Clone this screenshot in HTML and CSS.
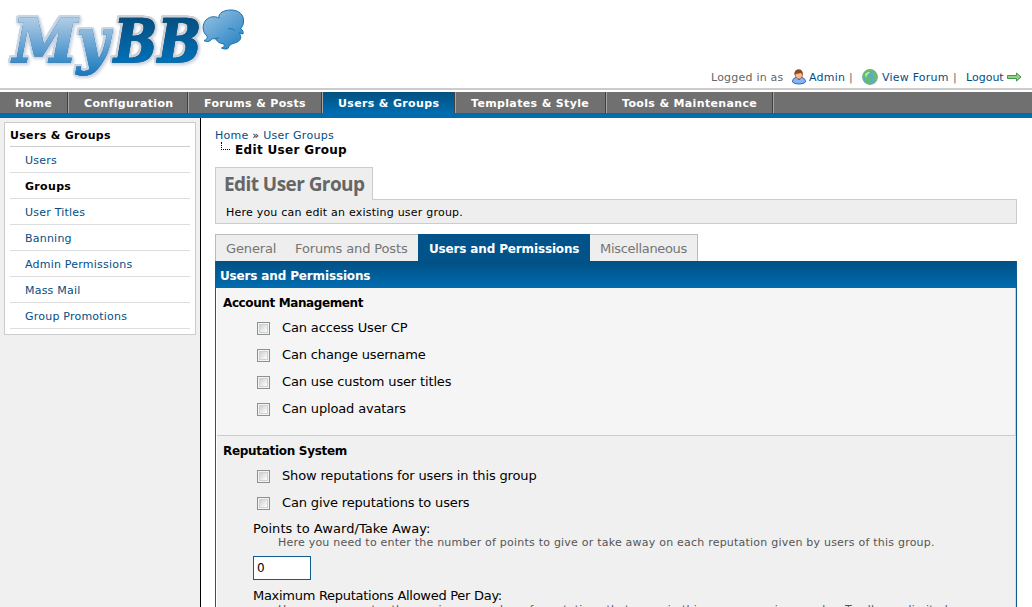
FILE: index.html
```html
<!DOCTYPE html>
<html lang="en">
<head>
<meta charset="utf-8">
<title>Edit User Group</title>
<link rel="stylesheet" href="styles.css">
</head>
<body>
<header class="header">
  <svg class="logo" width="250" height="84" viewBox="0 0 250 84" role="img" aria-label="MyBB">
    <defs>
      <linearGradient id="light" gradientUnits="userSpaceOnUse" x1="0" y1="18" x2="0" y2="76"><stop offset="0" stop-color="#b1cce6"/><stop offset="1" stop-color="#1478be"/></linearGradient>
      <linearGradient id="dark" gradientUnits="userSpaceOnUse" x1="0" y1="18" x2="0" y2="63"><stop offset="0" stop-color="#064f80"/><stop offset="1" stop-color="#0071b9"/></linearGradient>
      <linearGradient id="cloud" x1="0" y1="0" x2=".8" y2="1"><stop offset="0" stop-color="#9bc4e4"/><stop offset="1" stop-color="#2a84c3"/></linearGradient>
    </defs>
    <g class="logo-type">
      <text class="pale" x="13" y="62" textLength="64" lengthAdjust="spacingAndGlyphs" fill="url(#light)" stroke="url(#light)">M</text>
      <text class="pale" x="77" y="62" textLength="32" lengthAdjust="spacingAndGlyphs" fill="url(#light)" stroke="url(#light)">y</text>
      <text x="114" y="62" textLength="43" lengthAdjust="spacingAndGlyphs" fill="url(#dark)" stroke="url(#dark)">B</text>
      <text x="158" y="62" textLength="43" lengthAdjust="spacingAndGlyphs" fill="url(#dark)" stroke="url(#dark)">B</text>
    </g>
    <path d="M219 18C218 13 224 10 231 10C239 10 244 15 243.500 21C244 24 242 27 240.500 29C243 30 243.500 32 243 34L239 33C243 38 240 42 233 43.500C230 44.500 229 46 228 48.500C226 49.500 223 49 221.500 48C224 47 224.500 46 224 44C220 43.500 217 42 216 39C213 38.500 212 38.500 211 40C209 42 206 42 204 40.500C207 39.500 207.500 38 207 36C202 32 202 24 206 20C210 16 215 16 219 18Z" fill="url(#cloud)" stroke="#1b72b0"/>
    <path d="M228 28.500Q231 29 233 29L235 31M215 38.500L219 38" fill="none" stroke="#1976b5"/>
  </svg>
  <div class="welcome">
    <span class="muted w-logged">Logged in as</span>
    <svg class="user-icon" width="16" height="16" viewBox="0 0 16 16"><path d="M1.500 13C1.500 10 3 8.500 6 8.500L8 11L10 8.500C13 8.500 14.500 10.500 14.500 13Q13 15 8 15T1.500 13Z" fill="#86b4f8" stroke="#3264c7"/><path d="M4 5C4 2 5 1 8 1C11 1 11.500 3 11.500 6C11 9 9.500 10 8 10C5.500 10 4.500 8 4 5Z" fill="#f6ba91" stroke="#914d2a" stroke-width=".7"/><path d="M3.500 6C3.500 2 4.500.5 8 .5C10 .5 12 2 11.500 6L10 4L5 5Z" fill="#8a4a22"/></svg>
    <a class="w-admin">Admin</a><span class="bar w-bar1">|</span>
    <svg class="globe-icon" width="16" height="16" viewBox="0 0 16 16"><circle cx="8" cy="8" r="7.300" fill="#5fa9d0" stroke="#6fae8c" stroke-width="1.200"/><path d="M1 5L5 1H9L10 3L7 5L6 8L9 10L8 15L4 13L3 9L1 8Z" fill="#62c063"/><path d="M10 4L13 3L15 7L14 11L11 12L12 8Z" fill="#6dbe65"/><path d="M3 5L6 3L8 3L5 6L4 9Z" fill="#d5f0d8" opacity=".85"/></svg>
    <a class="w-forum">View Forum</a><span class="bar w-bar2">|</span>
    <a class="w-logout">Logout</a>
    <svg class="arrow-icon" width="15" height="10" viewBox="0 0 15 10"><path d="M.5 3.500H9.500V1L14 5L9.500 9V6.500H.5Z" fill="#94cf88" stroke="#43964b"/></svg>
  </div>
</header>
<nav class="menu">
  <a class="tab t-home"><span>Home</span></a><a class="tab t-config"><span>Configuration</span></a><a class="tab t-forums"><span>Forums &amp; Posts</span></a><a class="tab t-users active"><span>Users &amp; Groups</span></a><a class="tab t-style"><span>Templates &amp; Style</span></a><a class="tab t-tools"><span>Tools &amp; Maintenance</span></a><span class="menu-end"></span>
</nav>
<div class="columns">
  <aside class="sidebar">
    <div class="side-box">
      <h2><span>Users &amp; Groups</span></h2>
      <ul>
        <li><a>Users</a></li>
        <li class="current"><a>Groups</a></li>
        <li><a>User Titles</a></li>
        <li><a>Banning</a></li>
        <li><a>Admin Permissions</a></li>
        <li><a>Mass Mail</a></li>
        <li><a>Group Promotions</a></li>
      </ul>
    </div>
  </aside>
  <main class="page">
    <div class="breadcrumb"><a>Home</a> » <a>User Groups</a></div>
    <div class="crumb-current"><i class="branch"></i><strong>Edit User Group</strong></div>
    <div class="intro-tab"><span>Edit User Group</span></div>
    <div class="intro-text"><span>Here you can edit an existing user group.</span></div>
    <div class="subtabs">
      <a class="s-general">General</a><a class="s-forums">Forums and Posts</a><a class="s-users on"><span>Users and Permissions</span></a><a class="s-misc">Miscellaneous</a>
    </div>
    <section class="panel">
      <h3><span>Users and Permissions</span></h3>
      <div class="row account">
        <h4><span class="h-account">Account Management</span></h4>
        <label class="check"><i class="box"></i><span>Can access User CP</span></label>
        <label class="check"><i class="box"></i><span>Can change username</span></label>
        <label class="check"><i class="box"></i><span>Can use custom user titles</span></label>
        <label class="check"><i class="box"></i><span>Can upload avatars</span></label>
      </div>
      <div class="row reputation">
        <h4><span class="h-rep">Reputation System</span></h4>
        <label class="check"><i class="box"></i><span>Show reputations for users in this group</span></label>
        <label class="check"><i class="box"></i><span>Can give reputations to users</span></label>
        <div class="field">
          <div class="field-name">Points to Award/Take Away:</div>
          <div class="hint">Here you need to enter the number of points to give or take away on each reputation given by users of this group.</div>
          <input class="text-input" type="text" value="0">
          <div class="field-name tight">Maximum Reputations Allowed Per Day:</div>
          <div class="hint">Here you can enter the maximum number of reputations that users in this group can give per day. To allow unlimited</div>
        </div>
      </div>
    </section>
  </main>
</div>
</body>
</html>
```
FILE: styles.css
```css
* { box-sizing: border-box; }
html { overflow: hidden; }
body { margin: 0; height: 607px; overflow: hidden; background: #fff; color: #000; font: 11px/14px Verdana, "DejaVu Sans", sans-serif; letter-spacing: .22px; white-space: nowrap; }
a { color: #024e85; }
h2, h3, h4, ul { margin: 0; padding: 0; }
.header { height: 90px; border-bottom: 2px solid #ccc; display: flex; justify-content: space-between; }
.logo { display: block; letter-spacing: 0; }
.logo text { font: italic bold 60px "DejaVu Serif", serif; stroke-width: 1.6; filter: drop-shadow(.6px .8px 0 #2c3742) drop-shadow(1px 0 0 #cdd1d5) drop-shadow(-1.2px 0 0 #cdd1d5) drop-shadow(0 -1.2px 0 #cdd1d5) drop-shadow(0 .6px 0 #cdd1d5); }
.logo .pale { filter: drop-shadow(.6px .8px 0 #35506a) drop-shadow(1px 0 0 #c6d6e6) drop-shadow(-1.2px 0 0 #c6d6e6) drop-shadow(0 -1.2px 0 #c6d6e6) drop-shadow(0 .6px 0 #c6d6e6); }
.logo-type { filter: drop-shadow(1px 2px 1.5px rgba(70, 100, 150, .3)); }
.welcome { display: flex; margin-top: 69px; height: 16px; line-height: 17px; width: 321px; }
.muted { color: #666; }
.w-logged { width: 80px; }
.w-admin { width: 40px; margin-left: 2px; }
.w-bar1 { width: 13px; }
.w-forum { width: 71px; margin-left: 4px; }
.w-bar2 { width: 13px; }
.bar { color: #666; }
.user-icon, .globe-icon, .arrow-icon { flex: none; }
.w-logout { width: 41px; letter-spacing: 0; }
.arrow-icon { margin-top: 3px; }

.menu { display: flex; height: 28px; border-top: 2px solid #fff; border-bottom: 5px solid #006cb0; background: #707070; }
.tab { height: 21px; line-height: 23px; padding-left: 15px; border-left: 1px solid #a5a5a5; border-right: 1px solid #404040; color: #fff; font-weight: bold; letter-spacing: .35px; }
.t-home { width: 68px; border-left: 0; }
.t-config { width: 120px; }
.t-forums { width: 134px; }
.t-users { width: 133px; }
.t-style { width: 151px; }
.t-tools { width: 167px; }
.tab.active { background: linear-gradient(#02517f, #006cb0); }
.menu-end { width: 1px; background: #a5a5a5; }

.columns { display: flex; height: 489px; }
.sidebar { flex: none; width: 201px; padding: 4px; border-right: 1px solid #000; background: #f0f0f0; }
.side-box { width: 192px; height: 213px; padding: 0 5px; border: 1px solid #ccc; background: #fff; }
.side-box h2 { height: 24px; border-bottom: 1px solid #ccc; font-size: 11px; line-height: 25px; letter-spacing: .32px; }
.side-box ul { list-style: none; }
.side-box li { height: 26px; padding-left: 15px; line-height: 27px; border-bottom: 1px solid #ddd; }
.side-box .current a { color: #000; font-weight: bold; letter-spacing: .33px; }

.page { width: 816px; padding: 10px 0 0 14px; }
.breadcrumb { height: 14px; line-height: 15px; letter-spacing: .27px; }
.crumb-current { display: flex; height: 14px; line-height: 16px; font-size: 12px; letter-spacing: .33px; }
.branch { width: 9px; height: 8px; margin: 0 5px 0 6px; border-left: 1px dotted #000; border-bottom: 1px dotted #000; }
.intro-tab { position: relative; width: 158px; height: 33px; margin-top: 11px; padding-left: 8px; border: 1px solid #ccc; border-bottom: 0; background: #eee; color: #666; font: bold 19px/32px "Open Sans", "Noto Sans", sans-serif; letter-spacing: -.56px; }
.intro-text { width: 802px; height: 25px; margin-top: -1px; padding-left: 10px; line-height: 25px; border: 1px solid #ccc; background: #eee; }
.subtabs { display: flex; width: 483px; height: 27px; margin-top: 10px; border: 1px solid #bbb; border-bottom: 0; background: #eee; font-size: 13px; line-height: 27px; letter-spacing: -.13px; }
.subtabs a { color: #757575; }
.s-general { width: 69px; padding-left: 10px; }
.s-forums { width: 133px; padding-left: 10px; }
.subtabs .on { width: 172px; height: 27px; margin-top: -1px; padding: 2px 0 0 11px; background: #02538a; color: #fff; font-size: 12px; font-weight: bold; letter-spacing: -.15px; }
.s-misc { padding-left: 10px; letter-spacing: -.32px; }
.panel { width: 802px; height: 400px; border: 1px solid #0b5c91; border-top: 0; }
.panel h3 { height: 27px; padding-left: 4px; background: linear-gradient(#025083, #006cb0); color: #fff; font-size: 12px; line-height: 30px; letter-spacing: -.15px; }
.row { margin-left: 1px; padding-left: 6px; }
.account { height: 148px; border-right: 1px solid #ccc; border-bottom: 1px solid #ccc; background: #f5f5f5; }
.reputation { height: 230px; background: #f0f0f0; border-right: 1px solid #ddd; }
.row h4 { height: 26px; font-size: 12px; line-height: 30px; }
.h-account { letter-spacing: -.39px; }
.h-rep { letter-spacing: -.3px; }
.check { display: flex; height: 27px; padding-left: 34px; font-size: 13px; line-height: 27px; letter-spacing: -.15px; }
.box { flex: none; width: 13px; height: 13px; margin: 8px 12px 0 0; border: 1px solid #8e8f8f; background: linear-gradient(135deg, #bfc3c9, #fafafa 75%); box-shadow: inset 0 0 0 1px #f4f4f4, inset 0 0 0 2px #d0d1d3; }
.field { padding-left: 30px; }
.field-name { height: 20px; padding-top: 5px; line-height: 15px; font-size: 13px; letter-spacing: .05px; }
.tight { letter-spacing: -.28px; }
.hint { height: 13px; padding-left: 25px; color: #555; line-height: 14px; }
.text-input { display: block; width: 58px; height: 24px; margin: 7px 0 3px; padding: 0 3px; border: 1px solid #0f5c8e; background: #fff; font: 12px "DejaVu Sans", sans-serif; }
```
